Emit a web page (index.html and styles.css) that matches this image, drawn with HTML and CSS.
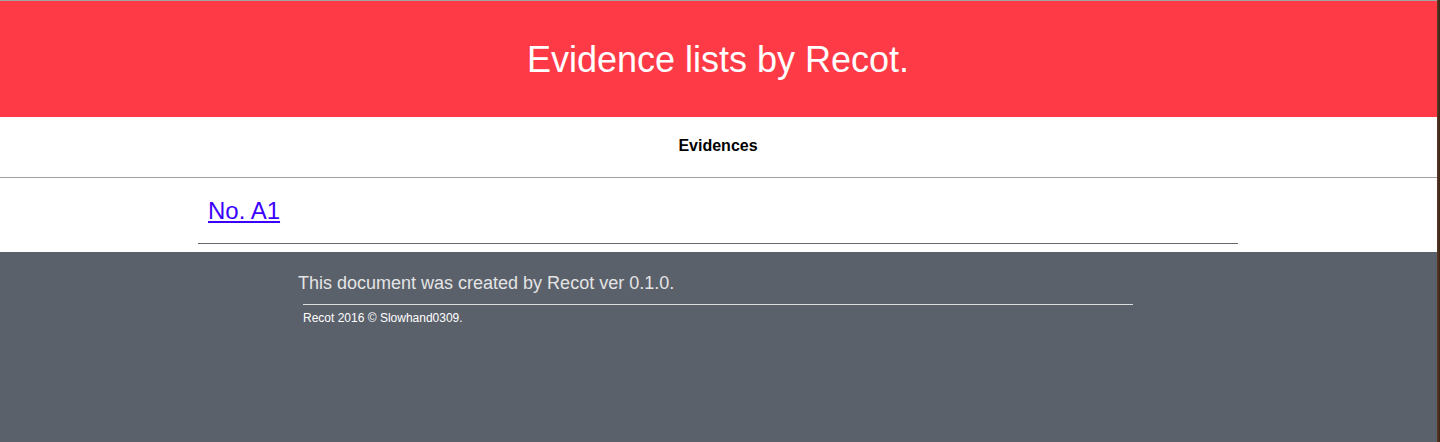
FILE: index.html
```html
<!DOCTYPE html>
<html lang="en">
<head>
<meta charset="utf-8">
<title>Evidence lists by Recot.</title>
<link rel="stylesheet" href="styles.css">
</head>
<body>
<div class="frame">
  <div class="page">
    <header class="site-header">
      <h1 class="title">Evidence lists by Recot.</h1>
    </header>
    <nav class="nav">
      <span class="nav-item">Evidences</span>
    </nav>
    <main class="content">
      <a class="evidence-link" href="#">No. A1</a>
      <hr class="content-rule">
    </main>
    <footer class="site-footer">
      <div class="footer-inner">
        <p class="footer-note">This document was created by Recot ver 0.1.0.</p>
        <hr class="footer-rule">
        <p class="footer-copy">Recot 2016 &copy; Slowhand0309.</p>
      </div>
    </footer>
  </div>
  <div class="edge"></div>
</div>
</body>
</html>
```

FILE: styles.css
```css
html, body {
  margin: 0;
  padding: 0;
  height: 100%;
}

body {
  font-family: "Liberation Sans", Arial, Helvetica, sans-serif;
  background: #5a616b;
}

.frame {
  display: flex;
  min-height: 100vh;
}

.page {
  flex: 1;
  display: flex;
  flex-direction: column;
  border-top: 1px solid #a3a3a3;
}

.edge {
  width: 3px;
  background: linear-gradient(to right, #5a3a26, #3a2416);
}

.site-header {
  height: 116px;
  padding-right: 1px;
  background: #ff3a47;
  display: flex;
  align-items: center;
  justify-content: center;
}

.title {
  margin: 2px 0 0;
  color: #ffffff;
  font-size: 36px;
  font-weight: normal;
  line-height: 1;
}

.nav {
  height: 40px;
  padding-top: 20px;
  padding-right: 1px;
  background: #ffffff;
  text-align: center;
  border-bottom: 1px solid #a0a0a0;
}

.nav-item {
  font-size: 16px;
  font-weight: bold;
  color: #000000;
}

.content {
  background: #ffffff;
  padding: 19px 1px 8px 0;
}

.evidence-link {
  display: block;
  width: 1030px;
  margin: 0 auto;
  padding-left: 10px;
  font-size: 24px;
  color: #3b00ff;
  text-decoration: underline;
}

.content-rule {
  width: 1040px;
  margin: 18px auto 0;
  border: 0;
  border-top: 1px solid #666a70;
  height: 0;
}

.site-footer {
  flex: 1;
  background: #5a616b;
  padding: 21px 1px 0 0;
}

.footer-inner {
  width: 840px;
  margin: 0 auto;
}

.footer-note {
  margin: 0;
  font-size: 18px;
  color: #e4e4e4;
}

.footer-rule {
  margin: 10px 5px 0;
  border: 0;
  border-top: 1px solid #dcdcdc;
  height: 0;
}

.footer-copy {
  margin: 6px 0 0 5px;
  font-size: 12px;
  color: #ffffff;
}
```
